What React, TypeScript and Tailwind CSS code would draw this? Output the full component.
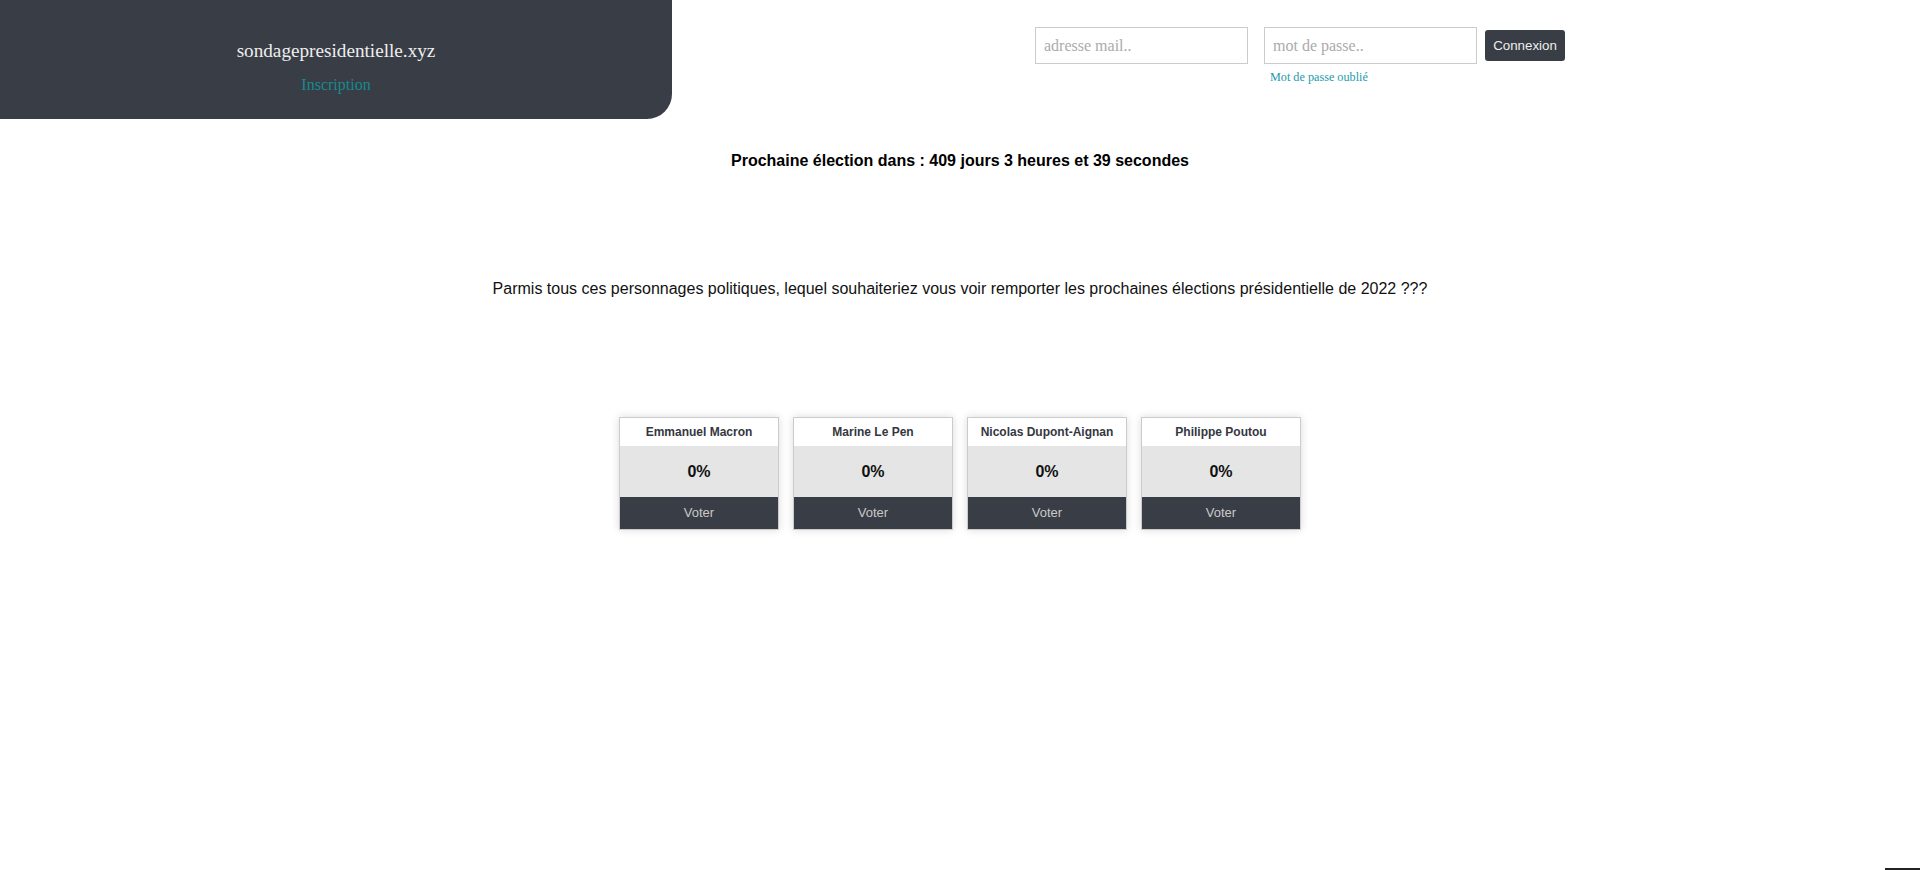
const candidats = [
  { nom: "Emmanuel Macron", score: 0 },
  { nom: "Marine Le Pen", score: 0 },
  { nom: "Nicolas Dupont-Aignan", score: 0 },
  { nom: "Philippe Poutou", score: 0 },
];

const Header = () => {
  return (
    <div className="flex h-[119px]">
      <div className="w-[672px] h-full bg-[#393d46] rounded-br-[25px] flex flex-col items-center pt-[40px] font-['Liberation_Serif',serif]">
        <p className="text-[19.2px] leading-[22px] text-[#eeeeee]">sondagepresidentielle.xyz</p>
        <a href="#" className="mt-[13px] text-[16px] leading-[20px] text-[#168a8e]">
          Inscription
        </a>
      </div>

      <div className="flex items-start ml-[363px] pt-[27px] font-['Liberation_Serif',serif]">
        <input
          type="text"
          placeholder="adresse mail.."
          className="w-[213px] h-[37px] border border-[#cccccc] px-2 text-[16px] outline-none placeholder:text-[#ababab]"
        />
        <div className="flex flex-col ml-[16px]">
          <input
            type="password"
            placeholder="mot de passe.."
            className="w-[213px] h-[37px] border border-[#cccccc] px-2 text-[16px] outline-none placeholder:text-[#ababab]"
          />
          <a href="#" className="mt-[6px] ml-[6px] text-[12.2px] leading-[15px] text-[#1b9bad]">
            Mot de passe oublié
          </a>
        </div>
        <button className="ml-[8px] mt-[3px] h-[31px] w-[80px] rounded-[3px] bg-[#393d46] text-[#eeeeee] text-[13.33px] font-['Liberation_Sans',Arial,sans-serif]">
          Connexion
        </button>
      </div>
    </div>
  );
};

const App = () => {
  return (
    <div className="relative min-h-[870px] bg-white font-['Liberation_Sans',Arial,sans-serif]">
      <Header />

      <p className="mt-[32px] text-center text-[16px] leading-[20px] font-bold text-black">
        Prochaine élection dans : 409 jours 3 heures et 39 secondes
      </p>

      <p className="mt-[108px] text-center text-[16px] leading-[20px] text-[#111111]">
        Parmis tous ces personnages politiques, lequel souhaiteriez vous voir remporter les prochaines élections présidentielle de 2022 ???
      </p>

      <div className="mt-[118px] flex justify-center gap-[14px]">
        {candidats.map((c) => (
          <div
            key={c.nom}
            className="w-[160px] border border-[#cccccc] bg-white shadow-[0_0_8px_rgba(0,0,0,0.15)] flex flex-col"
          >
            <div className="h-[28px] flex items-center justify-center text-[12px] font-bold text-[#343740]">
              {c.nom}
            </div>
            <div className="h-[51px] bg-[#e5e5e5] flex items-center justify-center text-[16px] font-bold text-[#111111]">
              {c.score}%
            </div>
            <button className="h-[32px] bg-[#393d46] text-[#c9c9c9] text-[13px]">Voter</button>
          </div>
        ))}
      </div>

      <div className="fixed bottom-0 right-0 w-[35px] h-[2px] bg-[#222222]" />
    </div>
  );
};

export default App;
